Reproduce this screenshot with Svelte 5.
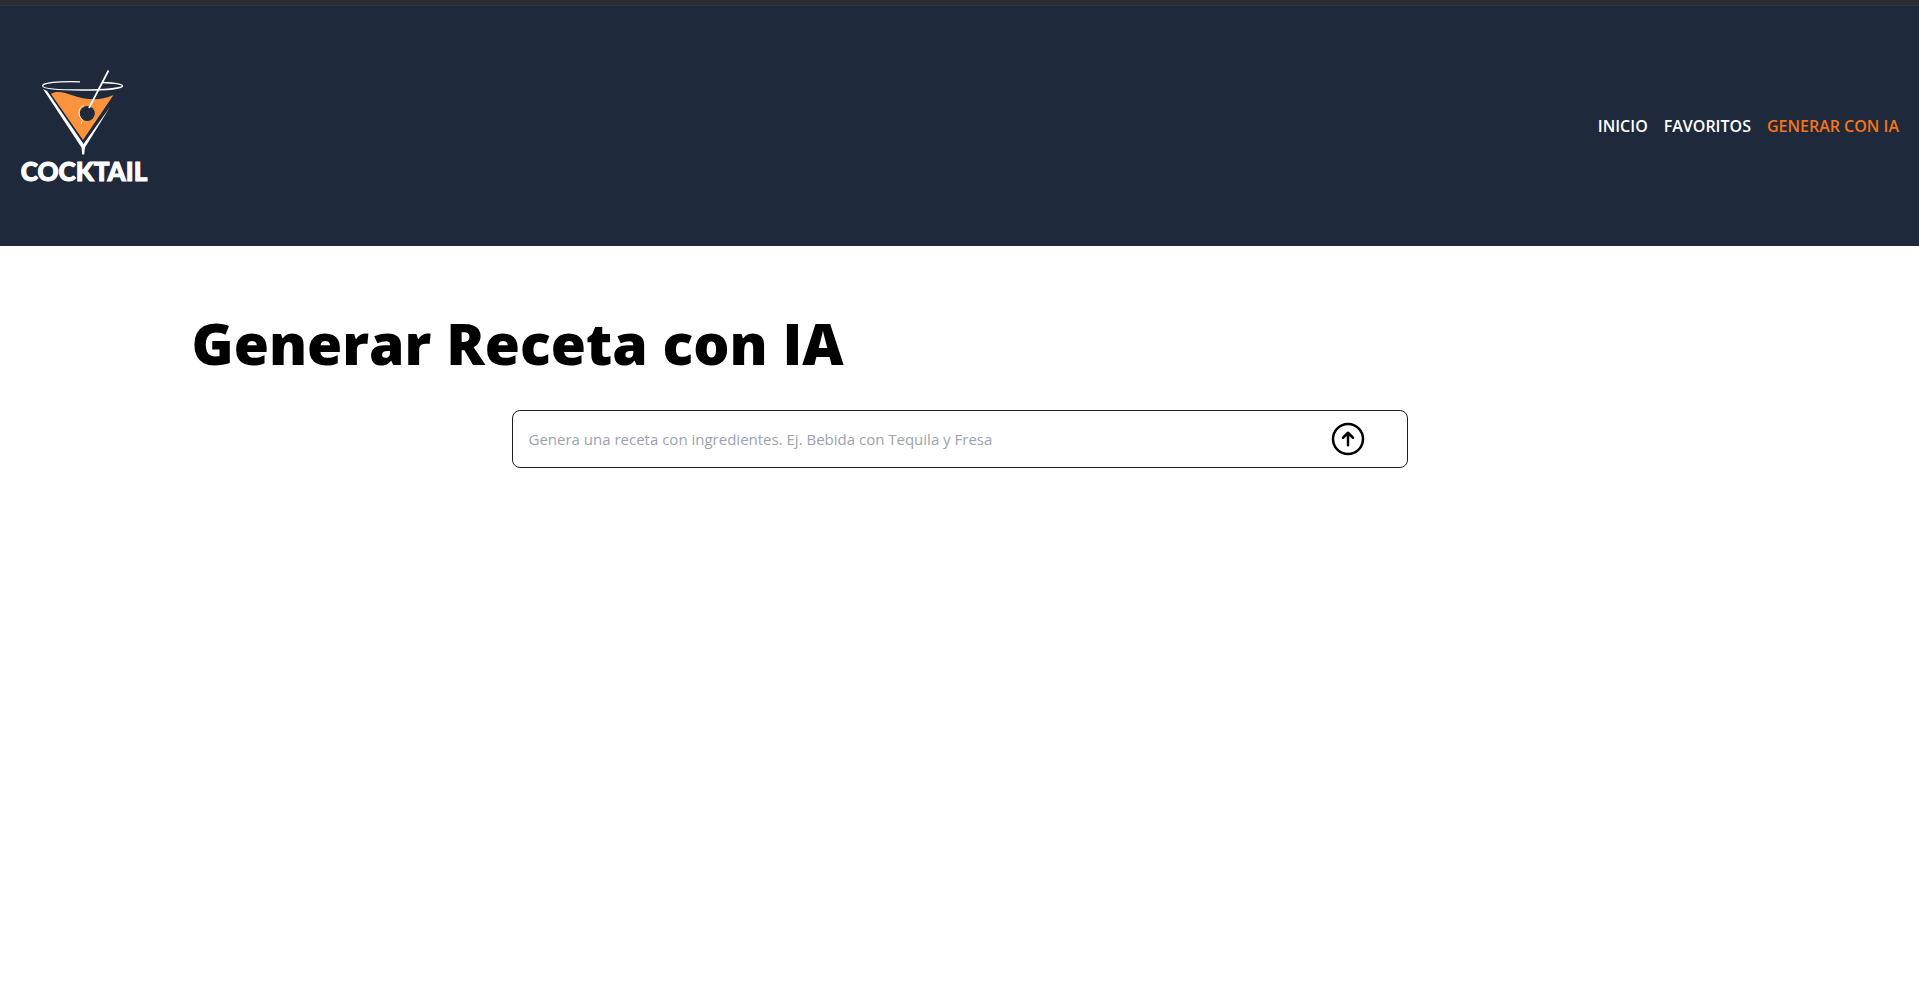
<script>
  const links = [
    { label: 'INICIO', href: '#inicio' },
    { label: 'FAVORITOS', href: '#favoritos' },
    { label: 'GENERAR CON IA', href: '#generar', active: true },
  ];
  let prompt = $state('');

  function submit(event) {
    event.preventDefault();
  }
</script>

<div class="strip"></div>
<header>
  <a class="logo" href="#inicio" aria-label="Cocktail">
    <svg viewBox="39 66 90 91" width="90" height="91" aria-hidden="true">
      <path d="M51 94 C57 90 65 93 73 95.500 C85 99.500 99 101.500 113.500 95 L83 140 Z" fill="#fb923c" />
      <path d="M43 89 L47 91 L83.500 144 L110 107 L85 147.500 L84.200 154.500 H82.200 L81.500 147.500 Z" fill="#fff" />
      <path d="M80 81.800 C58 81 42 83 42.600 86 C43 89 61 90 82 90 C104 90 122 88.500 122.500 86 C122.500 84 115 83 102 82.500" fill="none" stroke="#fff" stroke-width="1.300" />
      <circle cx="87.300" cy="113.500" r="7.500" fill="#1e293b" />
      <path d="M84 105.500 C78 107 77 116 83 120.500 M82 121 L81 124" fill="none" stroke="#fff" stroke-width=".8" />
      <path d="M89 108 L108.500 70.500" stroke="#fff" stroke-width="1.700" />
    </svg>
    <span>COCKTAIL</span>
  </a>
  <nav>
    {#each links as link}
      <a href={link.href} class:active={link.active}>{link.label}</a>
    {/each}
  </nav>
</header>

<main>
  <h1>Generar Receta con IA</h1>
  <form onsubmit={submit}>
    <input
      type="text"
      aria-label="Ingredientes"
      placeholder="Genera una receta con ingredientes. Ej. Bebida con Tequila y Fresa"
      bind:value={prompt}
    />
    <button type="submit" aria-label="Enviar">
      <svg viewBox="0 0 24 24" width="40" height="40" fill="none" stroke="#000" stroke-width="1.500" stroke-linecap="round" stroke-linejoin="round" aria-hidden="true">
        <path d="m15 11.250-3-3m0 0-3 3m3-3v7.500M21 12a9 9 0 1 1-18 0 9 9 0 0 1 18 0Z" />
      </svg>
    </button>
  </form>
</main>

<style>
  :global(body) {
    margin: 0;
    background: #fff;
    font-family: 'Open Sans', 'Noto Sans', sans-serif;
  }
  .strip {
    height: 5px;
    background: #2f2c31;
    border-bottom: 1px solid #293845;
  }
  header {
    display: flex;
    align-items: center;
    justify-content: space-between;
    padding: 60px 20px;
    background: #1e293b;
  }
  .logo {
    display: flex;
    flex-direction: column;
    align-items: center;
    width: 128px;
    color: #fff;
    text-decoration: none;
  }
  .logo svg {
    flex: none;
  }
  .logo span {
    font: 900 26px/29px Lato, sans-serif;
    -webkit-text-stroke: 1px #fff;
  }
  nav {
    display: flex;
    gap: 16px;
  }
  nav a {
    color: #fff;
    font-size: 16px;
    font-weight: 650;
    line-height: 24px;
    text-decoration: none;
  }
  nav .active {
    color: #f97316;
  }
  main {
    max-width: 1536px;
    margin: 0 auto;
    padding: 64px 0;
  }
  h1 {
    margin: 0;
    color: #000;
    font-size: 57px;
    font-weight: 800;
    line-height: 66px;
  }
  form {
    position: relative;
    max-width: 896px;
    margin: 34px auto 0;
  }
  input {
    display: block;
    box-sizing: border-box;
    width: 100%;
    padding: 16px;
    border: 1px solid #1e1e24;
    border-radius: 8px;
    background: #fff;
    color: #1e293b;
    font: 400 15px/24px 'Open Sans', 'Noto Sans', sans-serif;
  }
  input::placeholder {
    color: #9ca3af;
    opacity: 1;
  }
  button {
    position: absolute;
    top: 50%;
    right: 40px;
    display: flex;
    padding: 0;
    border: 0;
    background: none;
    transform: translateY(-50%);
    cursor: pointer;
  }
</style>
